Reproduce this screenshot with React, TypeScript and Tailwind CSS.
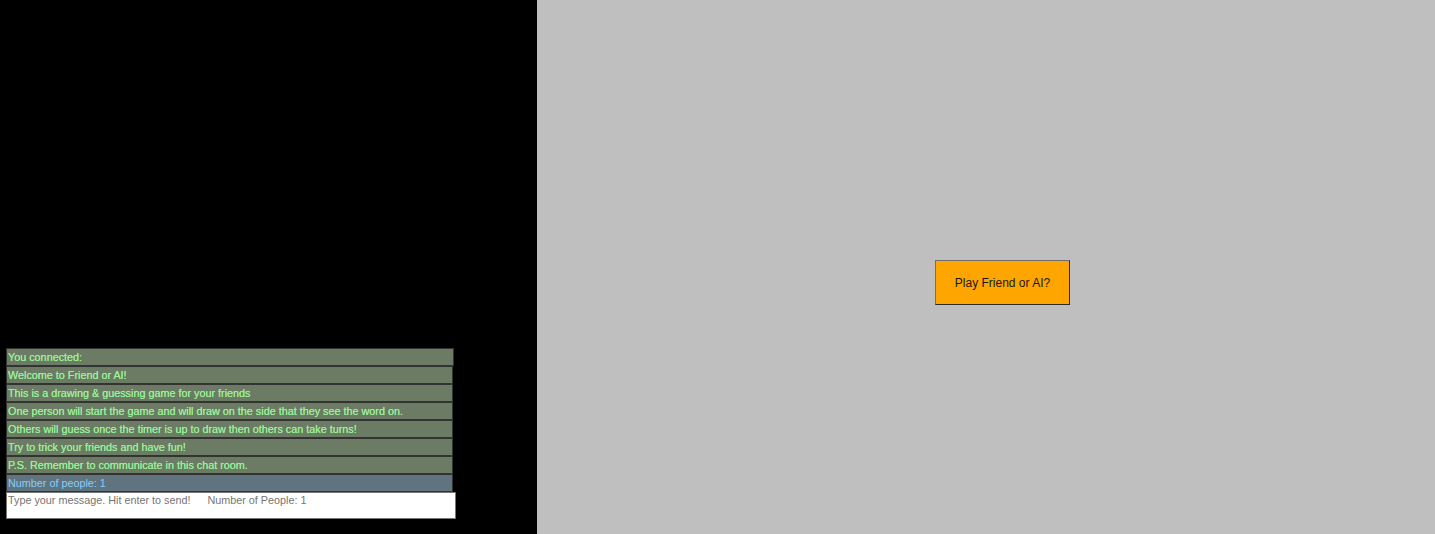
import React from "react";

const messages = [
  "You connected:",
  "Welcome to Friend or AI!",
  "This is a drawing & guessing game for your friends",
  "One person will start the game and will draw on the side that they see the word on.",
  "Others will guess once the timer is up to draw then others can take turns!",
  "Try to trick your friends and have fun!",
  "P.S. Remember to communicate in this chat room.",
];

export default function App() {
  return (
    <div className="flex w-[1435px] h-[534px] overflow-hidden" style={{ fontFamily: '"Liberation Sans", Arial, sans-serif' }}>
      <div className="w-[537px] h-full bg-black flex flex-col justify-end pl-[6px] pb-[15px]">
        <div className="flex flex-col w-[447px]">
          {messages.map((m, i) => (
            <div
              key={i}
              className={`h-[18px] border border-[#333333] bg-[#6c7b63] text-[#98f098] text-[10.8px] leading-[17px] pl-[1px] whitespace-nowrap [text-shadow:0_0_0.4px_#98f098] ${i === 0 ? "w-[448px]" : "w-[447px]"}`}
            >
              {m}
            </div>
          ))}
          <div className="h-[18px] w-[447px] border border-[#333333] bg-[#607480] text-[#87cefa] text-[10.8px] leading-[17px] pl-[1px] whitespace-nowrap">
            Number of people: 1
          </div>
        </div>
        <div className="w-[450px] h-[27px] bg-white border border-[#767676] text-[#757575] text-[10.8px] leading-[14px] pl-[1px] whitespace-nowrap flex">
          <span>Type your message. Hit enter to send!</span>
          <span className="ml-[17px]">Number of People: 1</span>
        </div>
      </div>
      <div className="flex-1 h-full bg-[#bfbfbf] pt-[260px] pl-[398px]">
        <button className="w-[135px] h-[45px] bg-[#ffa500] border border-[#2b2b2b] border-l-[#6f6f6f] border-t-[#6f6f6f] text-[12px] text-[#1a1a1a] flex items-center justify-center">
          Play Friend or AI?
        </button>
      </div>
    </div>
  );
}
